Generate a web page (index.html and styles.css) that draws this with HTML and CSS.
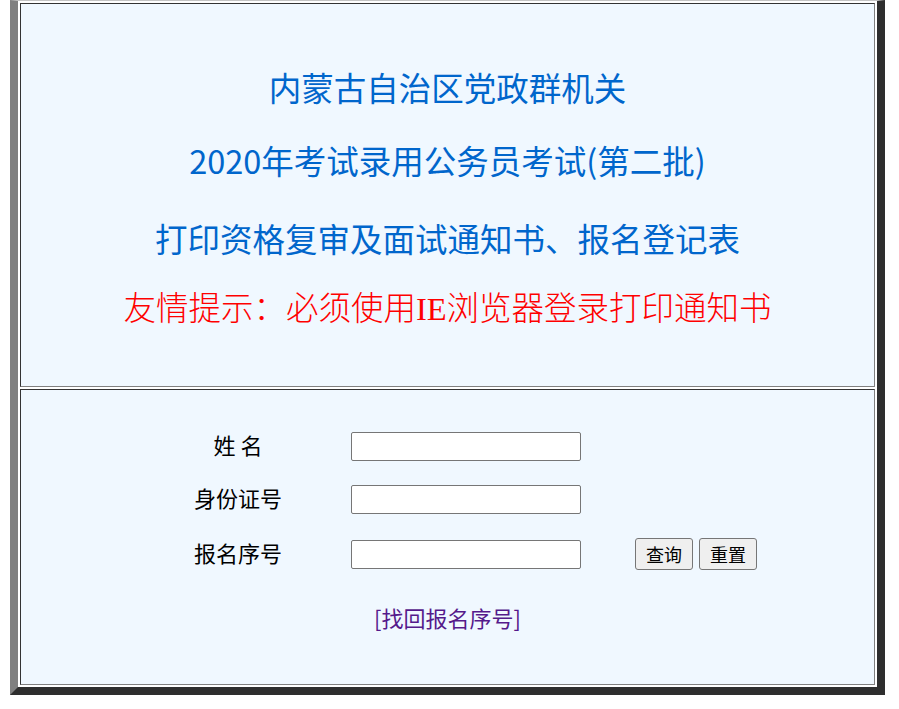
FILE: index.html
```html
<!DOCTYPE html>
<html lang="zh-CN">
<head>
    <meta charset="UTF-8">
    <title>打印资格复审及面试通知书、报名登记表</title>
    <link rel="stylesheet" href="styles.css">
</head>
<body>

<div class="frame">
    <div class="cell head">
        <div class="title">内蒙古自治区党政群机关</div>
        <div class="title second">2020年考试录用公务员考试(第二批)</div>
        <div class="title third">打印资格复审及面试通知书、报名登记表</div>
        <div class="tip">友情提示：必须使用IE浏览器登录打印通知书</div>
    </div>

    <div class="cell body">
        <form class="query" onsubmit="return false;">
            <label for="xm">姓 名</label>
            <input type="text" id="xm">
            <span></span>

            <label for="sfzh">身份证号</label>
            <input type="text" id="sfzh">
            <span></span>

            <label for="bmxh">报名序号</label>
            <input type="text" id="bmxh">
            <div class="buttons">
                <button type="submit">查询</button>
                <button type="reset">重置</button>
            </div>
        </form>
        <div class="find">
            <a href="#">[找回报名序号]</a>
        </div>
    </div>
</div>

</body>
</html>
```

FILE: styles.css
```css
body {
    margin: 0;
    background-color: #fff;
    font-family: "Noto Sans CJK SC", sans-serif;
}

.frame {
    box-sizing: border-box;
    width: 875px;
    margin-left: 10px;
    padding: 2px;
    border-top: 1px solid #c4c4c4;
    border-left: 8px solid #808080;
    border-right: 8px solid #2e2e2e;
    border-bottom: 8px solid #2e2e2e;
    background-color: #fff;
}

.cell {
    box-sizing: border-box;
    background-color: #f0f8ff;
    border-top: 1px solid #333;
    border-left: 1px solid #333;
    border-right: 1px solid #808080;
    border-bottom: 1px solid #808080;
}

.head {
    height: 384px;
    padding-top: 63px;
    margin-bottom: 2px;
    text-align: center;
}

.title {
    color: #0066cc;
    font-size: 32.5px;
    line-height: 40px;
    margin-bottom: 33px;
}

.title.second {
    margin-bottom: 38px;
}

.title.third {
    margin-bottom: 31px;
}

.tip {
    color: #ff0000;
    font-family: "Liberation Serif", "Noto Sans CJK SC", serif;
    font-size: 32.5px;
    font-weight: 300;
    line-height: 40px;
}

.body {
    height: 296px;
    padding-top: 42px;
}

.query {
    display: grid;
    grid-template-columns: 200px 230px auto;
    grid-template-rows: 29px 29px 32px;
    column-gap: 13px;
    row-gap: 24px;
    align-items: center;
    margin-left: 117px;
}

.query label {
    text-align: center;
    font-size: 22px;
    line-height: 26px;
    padding-bottom: 5px;
    color: #000;
}

.query input {
    box-sizing: border-box;
    width: 230px;
    height: 29px;
    border: 1px solid #767676;
    border-radius: 2px;
    background-color: #fff;
}

.buttons {
    display: flex;
    gap: 6px;
    padding-left: 41px;
}

.buttons button {
    box-sizing: border-box;
    height: 32px;
    padding: 0 10px;
    font-family: "Noto Sans CJK SC", sans-serif;
    font-size: 18px;
    color: #000;
    background-color: #efefef;
    border: 1px solid #767676;
    border-radius: 3px;
}

.find {
    margin-top: 34px;
    text-align: center;
    font-size: 22px;
    line-height: 26px;
}

.find a {
    color: #551a8b;
    text-decoration: none;
}
```
